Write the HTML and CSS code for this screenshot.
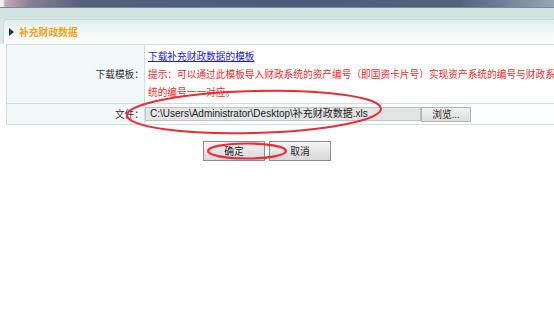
FILE: index.html
```html
<!DOCTYPE html>
<html lang="zh-CN">
<head>
<meta charset="utf-8">
<title>补充财政数据</title>
<link rel="stylesheet" href="styles.css">
</head>
<body>
<div class="chrome"></div>
<div class="strip"></div>
<div class="panel">
  <div class="panel-head"><span class="tri"></span><span class="title">补充财政数据</span></div>
</div>
<table class="form">
  <tr class="r1">
    <th>下载模板：</th>
    <td class="info"><a href="#" class="dl">下载补充财政数据的模板</a><br><span class="hint">提示：可以通过此模板导入财政系统的资产编号（即国资卡片号）实现资产系统的编号与财政系<br>统的编号一一对应。</span></td>
  </tr>
  <tr class="r2">
    <th>文件：</th>
    <td class="file-cell"><div class="file"><span class="path">C:\Users\Administrator\Desktop\补充财政数据.xls</span><span class="browse">浏览...</span></div></td>
  </tr>
</table>
<div class="actions"><button class="btn">确定</button><button class="btn">取消</button></div>
<svg class="marks" width="554" height="328" viewBox="0 0 554 328">
  <ellipse cx="254" cy="112" rx="127" ry="21" transform="rotate(-1.5 254 112)" fill="none" stroke="#ee2b34" stroke-width="2"/>
  <ellipse cx="247" cy="151" rx="39" ry="7.5" fill="none" stroke="#ee2b34" stroke-width="2.2"/>
</svg>
</body>
</html>
```

FILE: styles.css
```css
html, body {
  margin: 0;
  padding: 0;
}
body {
  position: relative;
  width: 554px;
  height: 328px;
  overflow: hidden;
  background: #ffffff;
  font-family: "Noto Sans CJK SC", "Liberation Sans", sans-serif;
  font-size: 9.7px;
  color: #333;
}
.chrome {
  height: 7px;
  border-bottom: 1px solid #80869a;
  background: linear-gradient(to right, #f4eef2 0, #f4eef2 3px, #c6a9ba 5px, #8a7d98 30px, #56607f 80px, #4d5a7b 300px, #55627f 460px, #8792aa 530px, #9aa3b8 554px);
}
.strip {
  height: 11px;
  background: #d2e4e0;
}
.panel {
  background: #d9e9e6;
}
.panel-head {
  margin-left: 3px;
  height: 24px;
  border-top: 1px solid #c3d7da;
  border-left: 1px solid #c9dcdc;
  border-top-left-radius: 4px;
  background: linear-gradient(to bottom, #e1eeec 0, #f1f8f6 50%, #fcfefd 100%);
  display: flex;
  align-items: center;
  padding-left: 5px;
}
.tri {
  width: 0;
  height: 0;
  border-top: 4px solid transparent;
  border-bottom: 4px solid transparent;
  border-left: 5px solid #173d3a;
  margin-right: 5px;
}
.title {
  color: #f5a21c;
  font-weight: bold;
  font-size: 9.8px;
  line-height: 12px;
}
.form {
  margin-left: 6px;
  width: 570px;
  border-collapse: separate;
  border-spacing: 0;
  border-top: 1px solid #cbe1df;
  border-left: 1px solid #cbe1df;
  table-layout: fixed;
}
.form th, .form td {
  border-right: 1px solid #cbe1df;
  border-bottom: 1px solid #cbe1df;
  padding: 0;
  vertical-align: middle;
}
.form th {
  width: 137px;
  background: #f3f8f8;
  font-weight: normal;
  text-align: right;
  padding-right: 0;
  color: #333;
}
.r1 th, .r1 td {
  height: 54px;
  padding-top: 2px;
  padding-bottom: 2px;
}
.info {
  padding-left: 3px !important;
  line-height: 18px;
}
.dl {
  color: #1a1ae8;
  text-decoration: underline;
}
.hint {
  color: #ff1f1f;
}
.r2 th, .r2 td {
  height: 20px;
}
.file {
  display: flex;
  align-items: center;
  padding-left: 0;
}
.path {
  box-sizing: border-box;
  width: 276px;
  height: 14px;
  border: 1px solid #c2c2c2;
  background: #e4e4e4;
  font-family: "Liberation Sans", "Noto Sans CJK SC", sans-serif;
  font-size: 10px;
  line-height: 12px;
  padding-left: 4px;
  color: #222;
  white-space: nowrap;
  overflow: hidden;
}
.browse {
  box-sizing: border-box;
  width: 50px;
  height: 15px;
  border: 1px solid #b3b3b3;
  background: linear-gradient(to bottom, #f2f2f2, #dedede);
  font-size: 9.7px;
  line-height: 13px;
  text-align: center;
  color: #222;
}
.actions {
  display: flex;
  gap: 4px;
  margin-top: 16px;
  padding-left: 203px;
}
.btn {
  box-sizing: border-box;
  width: 62px;
  height: 20px;
  border: 1px solid #8d8d8d;
  background: linear-gradient(to bottom, #f6f6f6, #e2e2e2 60%, #d9d9d9);
  font-family: "Noto Sans CJK SC", sans-serif;
  font-size: 9.7px;
  color: #222;
  padding: 0;
}
.marks {
  position: absolute;
  left: 0;
  top: 0;
  pointer-events: none;
}
```
